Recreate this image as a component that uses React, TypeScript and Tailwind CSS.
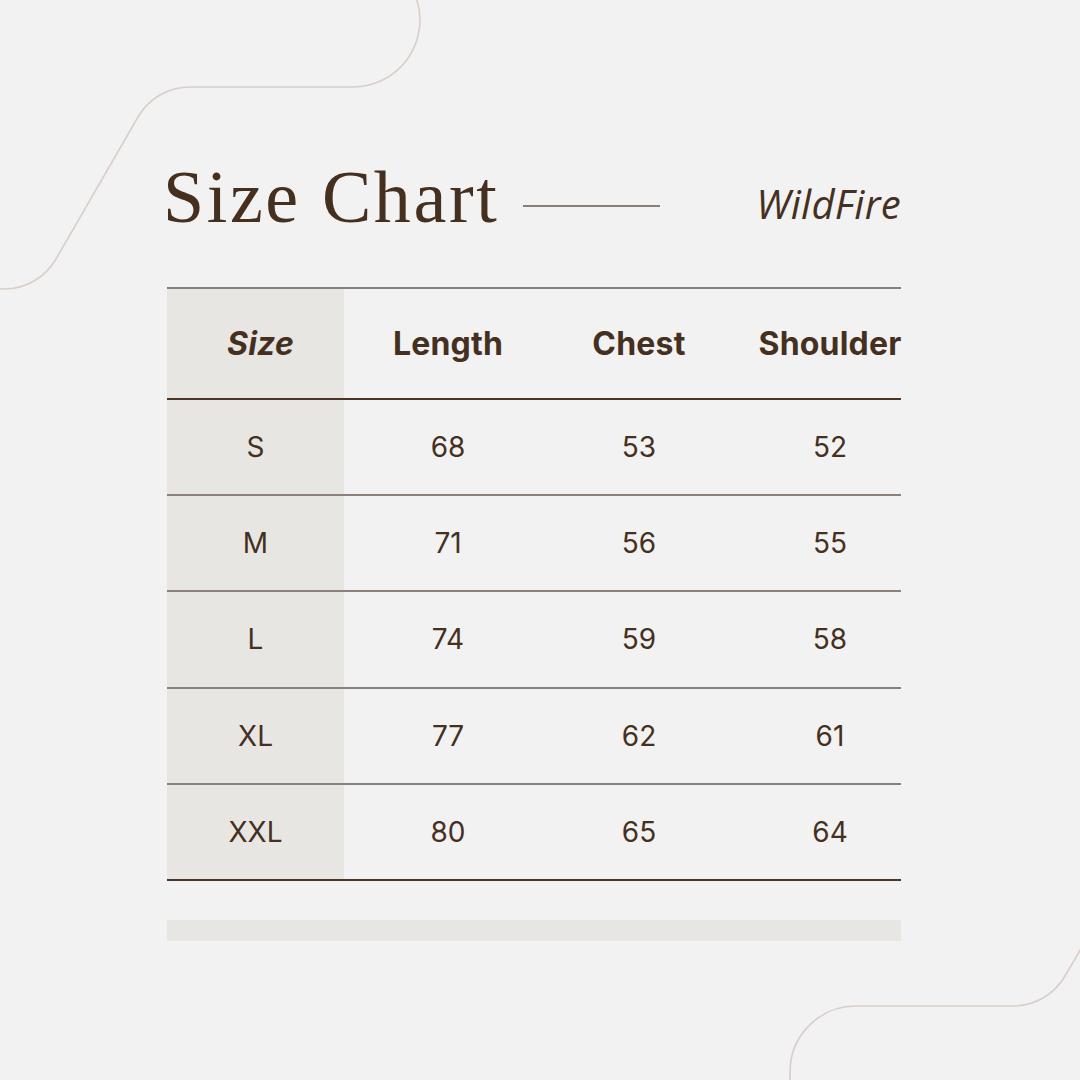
import React from "react";

const rows = [
  ["S", "68", "53", "52"],
  ["M", "71", "56", "55"],
  ["L", "74", "59", "58"],
  ["XL", "77", "62", "61"],
  ["XXL", "80", "65", "64"],
];

const cols = "grid grid-cols-[177px_208px_174px_175px]";

export default function App() {
  const sans = { fontFamily: "Inter, 'Open Sans', sans-serif" };
  return (
    <div className="relative w-[1080px] h-[1080px] overflow-hidden bg-[#f2f2f2] text-[#45301f]" style={sans}>
      <svg className="absolute inset-0 pointer-events-none" width="1080" height="1080" viewBox="0 0 1080 1080" fill="none">
        <path
          d="M -2 289 L 4 289 A 60 60 0 0 0 56 259 L 138 117 A 60 60 0 0 1 190 87 L 353 87 A 67 67 0 0 0 416.9 0"
          stroke="#d9cec8"
          strokeWidth="1.6"
        />
        <path
          d="M 790 1082 L 790 1072 A 66 66 0 0 1 856 1006 L 1013 1006 A 60 60 0 0 0 1065 976 L 1082 947"
          stroke="#d9cec8"
          strokeWidth="1.6"
        />
      </svg>

      <div className="relative flex flex-col pt-[150px] pl-[167px] w-[901px]">
        <div className="flex items-start h-[112px]">
          <div
            className="mt-[10px] text-[74px] leading-none tracking-[2.6px] ml-[-4px]"
            style={{ fontFamily: "'Liberation Serif', serif" }}
          >
            Size Chart
          </div>
          <div className="ml-[24px] mt-[55px] w-[137px] h-[1.5px] bg-[#8a7f78]" />
          <div className="flex-1" />
          <div
            className="mt-[34px] text-[40px] italic leading-none tracking-[0.3px]"
            style={{ fontFamily: "'Open Sans', sans-serif" }}
          >
            WildFire
          </div>
        </div>

        <div className="mt-[25px] w-[734px] border-t-2 border-[#8a7f78]">
          <div className={cols + " h-[111px] border-b-2 border-[#4a3526] text-[32px] font-bold tracking-[0.2px]"}>
            <div className="bg-[#e8e6e2] flex items-center justify-center italic pl-[10px]">Size</div>
            <div className="flex items-center justify-center">Length</div>
            <div className="flex items-center justify-center">Chest</div>
            <div className="flex items-center justify-center pl-[33px]">Shoulder</div>
          </div>
          {rows.map((r, i) => (
            <div
              key={r[0]}
              className={
                i === rows.length - 1
                  ? cols + " h-[96.2px] border-b-2 border-[#4a3526] text-[28px]"
                  : cols + " h-[96.2px] border-b-2 border-[#8c817a] text-[28px]"
              }
            >
              <div className="bg-[#e8e6e2] flex items-center justify-center">{r[0]}</div>
              <div className="flex items-center justify-center">{r[1]}</div>
              <div className="flex items-center justify-center">{r[2]}</div>
              <div className="flex items-center justify-center pl-[33px]">{r[3]}</div>
            </div>
          ))}
        </div>

        <div className="mt-[39px] w-[734px] h-[21px] bg-[#e8e6e2]" />
      </div>
    </div>
  );
}
